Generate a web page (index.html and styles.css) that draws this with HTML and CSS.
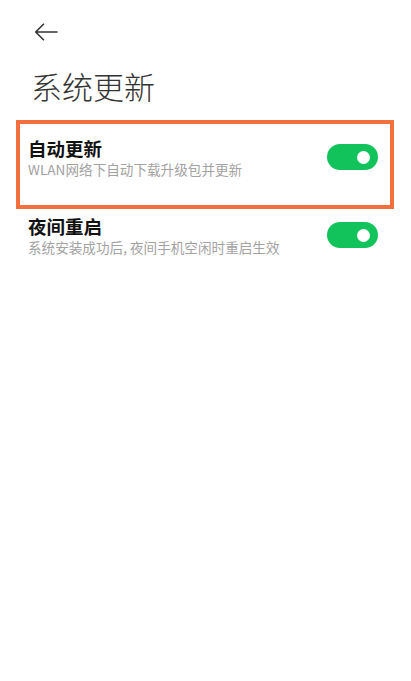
FILE: index.html
```html
<!DOCTYPE html>
<html lang="zh-CN">
  <head>
    <meta charset="UTF-8" />
    <meta name="viewport" content="width=device-width, initial-scale=1.0" />
    <title>系统更新</title>
    <link rel="stylesheet" href="styles.css">
  </head>
  <body>
    <div class="page">
      <div class="top-bar">
        <svg class="back" width="24" height="20" viewBox="0 0 24 20">
          <path d="M23 10H2M9.5 2.2L1.7 10L9.5 17.8" fill="none" stroke="#333" stroke-width="1.6" stroke-linecap="round" stroke-linejoin="round" />
        </svg>
      </div>
      <h1 class="title">系统更新</h1>
      <div class="list">
        <div class="row highlight">
          <div class="row-text">
            <div class="row-title">自动更新</div>
            <div class="row-desc">WLAN网络下自动下载升级包并更新</div>
          </div>
          <span class="switch"><span class="knob"></span></span>
        </div>
        <div class="row plain">
          <div class="row-text">
            <div class="row-title">夜间重启</div>
            <div class="row-desc">系统安装成功后, 夜间手机空闲时重启生效</div>
          </div>
          <span class="switch"><span class="knob"></span></span>
        </div>
      </div>
    </div>
  </body>
</html>
```

FILE: styles.css
```css
body {
  margin: 0;
  padding: 0;
  background: #fff;
  font-family: "Noto Sans CJK SC", "Noto Sans", sans-serif;
  color: #333;
}

.page {
  width: 411px;
  min-height: 681px;
}

.top-bar {
  height: 20px;
  padding: 22px 0 0 34px;
}

.back {
  display: block;
}

.title {
  margin: 24px 0 0 0;
  padding-left: 31px;
  font-size: 31px;
  line-height: 40px;
  font-weight: 300;
  color: #333;
}

.list {
  margin-top: 14px;
  padding: 0 17px 0 16px;
}

.row {
  display: flex;
  align-items: center;
  justify-content: space-between;
}

.highlight {
  border: 4px solid #f3703e;
  padding: 12px 12px 27px 8px;
}

.plain {
  padding: 5px 16px 0 12px;
}

.row-title {
  font-size: 18.5px;
  line-height: 24px;
  font-weight: 700;
  color: #111;
}

.row-desc {
  font-size: 13.6px;
  line-height: 18px;
  color: #a2a2a2;
}

.switch {
  display: flex;
  align-items: center;
  justify-content: flex-end;
  width: 51px;
  height: 26px;
  padding-right: 8px;
  box-sizing: border-box;
  border-radius: 13px;
  background: #12c35c;
}

.knob {
  width: 13px;
  height: 13px;
  border-radius: 50%;
  background: #fff;
}
```
